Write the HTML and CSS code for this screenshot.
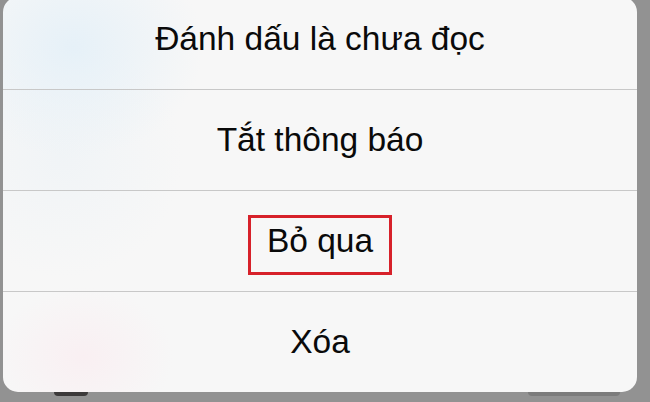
FILE: index.html
```html
<!DOCTYPE html>
<html lang="vi">
<head>
<meta charset="utf-8">
<title>Action sheet</title>
<link rel="stylesheet" href="styles.css">
</head>
<body>
<div class="screen">
  <div class="sheet">
    <div class="row row-first">Đánh dấu là chưa đọc</div>
    <div class="row">Tắt thông báo</div>
    <div class="row"><span class="highlight">Bỏ qua</span></div>
    <div class="row">Xóa</div>
  </div>
  <div class="under">
    <span class="blob blob-left"></span>
    <span class="blob blob-right"></span>
  </div>
</div>
</body>
</html>
```

FILE: styles.css
```css
html, body {
  margin: 0;
  padding: 0;
  background: #929292;
}

.screen {
  width: 650px;
  height: 402px;
  overflow: hidden;
  background: #929292;
}

.sheet {
  margin: -3px 0 0 3px;
  width: 634px;
  height: 395px;
  border-radius: 15px;
  overflow: hidden;
  display: flex;
  flex-direction: column;
  background:
    radial-gradient(ellipse 90px 70px at 80px 360px, rgba(250,236,240,0.7), rgba(250,236,240,0)),
    radial-gradient(ellipse 130px 110px at 70px 50px, rgba(228,240,248,0.9), rgba(228,240,248,0)),
    radial-gradient(ellipse 120px 120px at 60px 160px, rgba(236,242,246,0.6), rgba(236,242,246,0)),
    #f7f7f7;
  font-family: "Liberation Sans", Arial, sans-serif;
  font-size: 33.5px;
  color: #0a0a0a;
}

.row {
  flex: 0 0 100px;
  height: 100px;
  display: flex;
  align-items: center;
  justify-content: center;
  border-top: 1px solid #c8c8c8;
  line-height: 1;
}

.row-first {
  flex-basis: 83px;
  height: 83px;
  padding-bottom: 9px;
  border-top: none;
}

.highlight {
  display: inline-block;
  border: 3px solid #d7212a;
  padding: 0 16px 8px 16px;
  line-height: 46px;
  margin-top: 8px;
}

.under {
  height: 10px;
  display: flex;
  align-items: flex-start;
}

.blob {
  display: block;
  height: 4px;
}

.blob-left {
  margin-left: 54px;
  width: 34px;
  background: #3c3a3a;
  border-radius: 0 0 17px 17px;
}

.blob-right {
  margin-left: 440px;
  width: 92px;
  background: #7c7c7c;
  border-radius: 0 0 10px 10px;
}
```
